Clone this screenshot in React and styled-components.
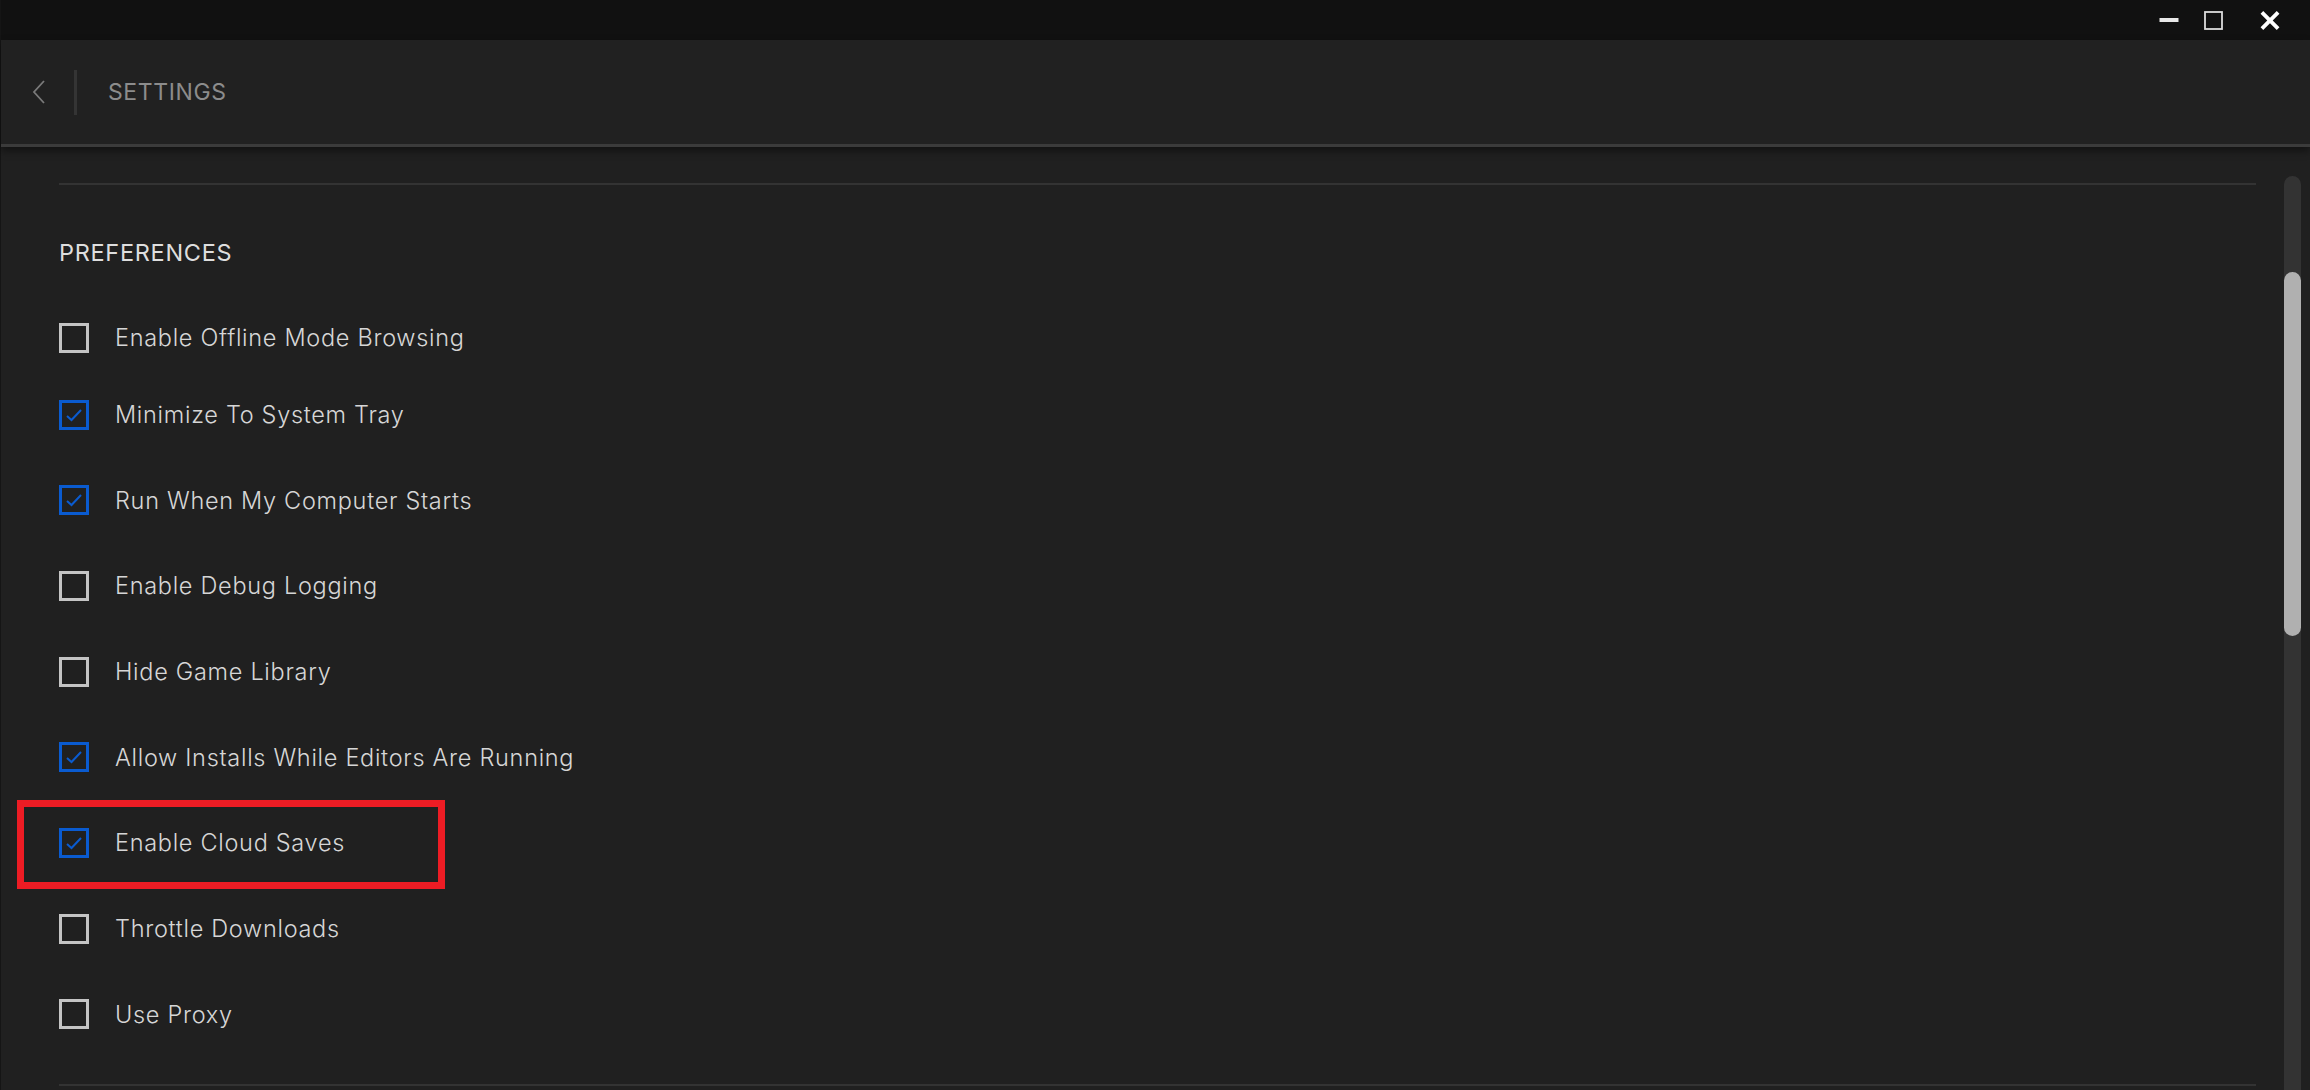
import React from "react";
import styled, { createGlobalStyle } from "styled-components";

const GlobalStyle = createGlobalStyle`
  html, body {
    margin: 0;
    padding: 0;
    background: #202020;
    overflow: hidden;
  }
  *, *::before, *::after { box-sizing: border-box; }
`;

const Window = styled.div`
  display: flex;
  flex-direction: column;
  width: 100vw;
  height: 100vh;
  background: #202020;
  border-left: 1px solid #151515;
  font-family: Inter, "Noto Sans", sans-serif;
`;

const TitleBar = styled.div`
  display: flex;
  justify-content: flex-end;
  align-items: center;
  height: 40px;
  background: #111111;
  padding-right: 30px;
  flex-shrink: 0;
`;

const WinButton = styled.div`
  display: flex;
  align-items: center;
  justify-content: center;
  width: 20px;
  height: 20px;
  margin-left: ${props => props.gap || 0}px;
`;

const Header = styled.div`
  display: flex;
  align-items: center;
  height: 107px;
  flex-shrink: 0;
  background: #212121;
  border-bottom: 3px solid #3b3b3b;
  box-shadow: 0 4px 8px rgba(0, 0, 0, 0.45);
  position: relative;
  z-index: 1;
`;

const BackButton = styled.div`
  display: flex;
  align-items: center;
  justify-content: center;
  width: 73px;
  height: 45px;
  padding-left: 2px;
`;

const Divider = styled.div`
  width: 3px;
  height: 45px;
  background: #343434;
`;

const PageTitle = styled.div`
  margin-left: 31px;
  font-size: 23px;
  letter-spacing: 0.6px;
  color: #8c8c8c;
  font-weight: 400;
`;

const Body = styled.div`
  display: flex;
  flex: 1;
  min-height: 0;
`;

const Content = styled.div`
  flex: 1;
  padding: 36px 28px 0 58px;
  display: flex;
  flex-direction: column;
`;

const Rule = styled.div`
  height: 2px;
  background: #333333;
  flex-shrink: 0;
`;

const SectionTitle = styled.div`
  margin-top: 54px;
  font-size: 23.5px;
  letter-spacing: 0.7px;
  color: #dedede;
  font-weight: 400;
  line-height: 28px;
`;

const List = styled.div`
  display: flex;
  flex-direction: column;
  margin-top: 28px;
  flex: 1;
`;

const Row = styled.div`
  position: relative;
  display: flex;
  align-items: center;
  height: 85.7px;
  flex-shrink: 0;
  &:first-child {
    margin-bottom: -9px;
  }
  ${props =>
    props.highlight &&
    `
    &::after {
      content: "";
      position: absolute;
      left: -42px;
      top: 0;
      width: 428px;
      height: 89px;
      border: 7.5px solid #ed1c24;
      pointer-events: none;
    }
  `}
`;

const Box = styled.div`
  display: flex;
  align-items: center;
  justify-content: center;
  width: 30px;
  height: 30px;
  border: 3px solid ${props => (props.checked ? "#0a5bd0" : "#c4c4c4")};
  flex-shrink: 0;
`;

const Label = styled.div`
  margin-left: 26px;
  font-size: 23.5px;
  letter-spacing: 0.7px;
  color: #d6d6d6;
  font-weight: 300;
`;

const BottomRule = styled.div`
  height: 2px;
  background: #333333;
  margin-top: auto;
  margin-bottom: 4px;
`;

const ScrollTrack = styled.div`
  position: relative;
  width: 17px;
  margin: 29px 9px 0 0;
  background: #333333;
  border-radius: 9px 9px 0 0;
  flex-shrink: 0;
`;

const ScrollThumb = styled.div`
  position: absolute;
  left: 0;
  right: 0;
  border-radius: 9px;
  background: #b0b0b0;
`;

const Check = () => (
  <svg width="18" height="14" viewBox="0 0 18 14">
    <path d="M2 8 L6.5 12 L16 2" fill="none" stroke="#0a5bd0" strokeWidth="2" />
  </svg>
);

const items = [
  { label: "Enable Offline Mode Browsing", checked: false },
  { label: "Minimize To System Tray", checked: true },
  { label: "Run When My Computer Starts", checked: true },
  { label: "Enable Debug Logging", checked: false },
  { label: "Hide Game Library", checked: false },
  { label: "Allow Installs While Editors Are Running", checked: true },
  { label: "Enable Cloud Saves", checked: true, highlight: true },
  { label: "Throttle Downloads", checked: false },
  { label: "Use Proxy", checked: false }
];

const App = () => (
  <>
    <GlobalStyle />
    <Window>
      <TitleBar>
        <WinButton>
          <svg width="20" height="20" viewBox="0 0 20 20">
            <rect x="0.5" y="8" width="19" height="4" fill="#e8e8e8" />
          </svg>
        </WinButton>
        <WinButton gap={24}>
          <svg width="19" height="19" viewBox="0 0 19 19">
            <rect x="1" y="1" width="17" height="17" fill="none" stroke="#dcdcdc" strokeWidth="1.8" />
          </svg>
        </WinButton>
        <WinButton gap={37}>
          <svg width="21" height="21" viewBox="0 0 21 21">
            <path d="M2 2 L19 19 M19 2 L2 19" stroke="#ffffff" strokeWidth="4" />
          </svg>
        </WinButton>
      </TitleBar>
      <Header>
        <BackButton>
          <svg width="14" height="24" viewBox="0 0 14 24">
            <path d="M12 1 L2 12 L12 23" fill="none" stroke="#7a7a7a" strokeWidth="1.8" />
          </svg>
        </BackButton>
        <Divider />
        <PageTitle>SETTINGS</PageTitle>
      </Header>
      <Body>
        <Content>
          <Rule />
          <SectionTitle>PREFERENCES</SectionTitle>
          <List>
            {items.map(item => (
              <Row key={item.label} highlight={item.highlight}>
                <Box checked={item.checked}>{item.checked && <Check />}</Box>
                <Label>{item.label}</Label>
              </Row>
            ))}
          </List>
          <BottomRule />
        </Content>
        <ScrollTrack>
          <ScrollThumb style={{ top: 96, height: 364 }} />
        </ScrollTrack>
      </Body>
    </Window>
  </>
);

export default App;
